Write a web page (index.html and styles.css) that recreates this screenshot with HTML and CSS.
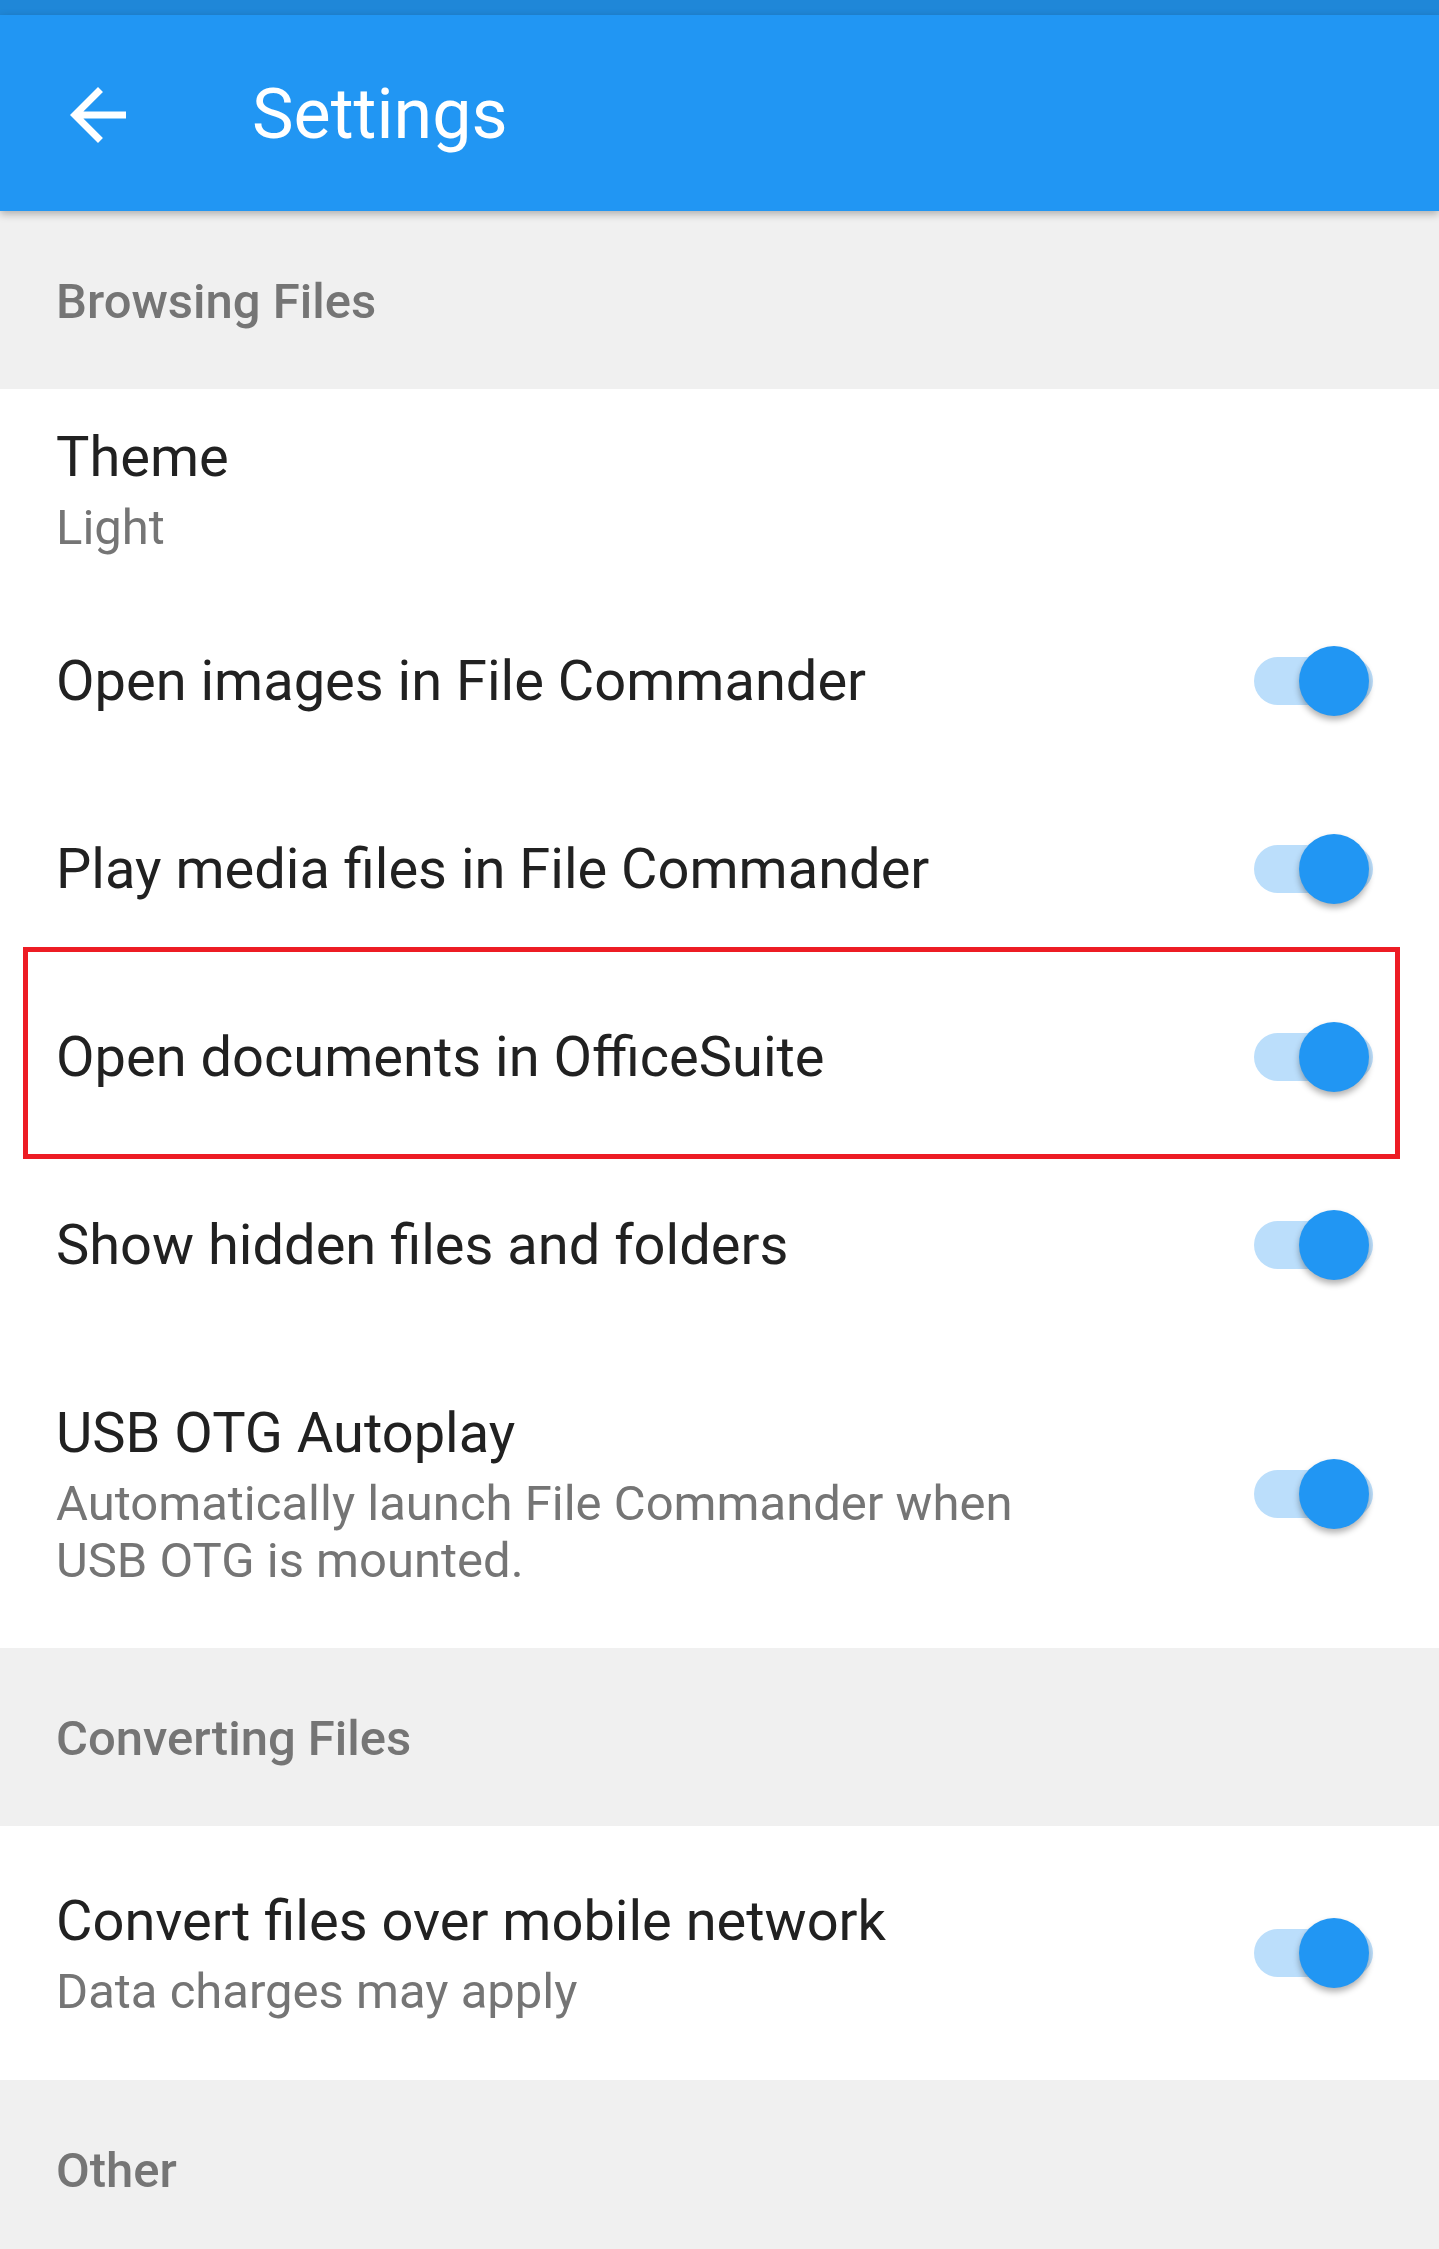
FILE: index.html
```html
<!DOCTYPE html>
<html lang="en">
<head>
  <meta charset="UTF-8">
  <title>Settings</title>
  <link rel="stylesheet" href="styles.css">
</head>
<body>
  <div class="status-bar"></div>

  <div class="app-bar">
    <svg class="back-icon" viewBox="0 0 24 24" width="84" height="84">
      <path d="M20 11H7.83l5.59-5.59L12 4l-8 8 8 8 1.41-1.41L7.83 13H20v-2z" fill="#fff"/>
    </svg>
    <div class="app-title">Settings</div>
  </div>

  <div class="section-header">Browsing Files</div>

  <div class="pref pref-theme">
    <div class="pref-text">
      <div class="pref-title">Theme</div>
      <div class="pref-summary">Light</div>
    </div>
  </div>

  <div class="pref pref-single">
    <div class="pref-text">
      <div class="pref-title">Open images in File Commander</div>
    </div>
    <div class="switch"><span class="track"></span><span class="thumb"></span></div>
  </div>

  <div class="pref pref-single">
    <div class="pref-text">
      <div class="pref-title">Play media files in File Commander</div>
    </div>
    <div class="switch"><span class="track"></span><span class="thumb"></span></div>
  </div>

  <div class="pref pref-single highlighted">
    <div class="pref-text">
      <div class="pref-title">Open documents in OfficeSuite</div>
    </div>
    <div class="switch"><span class="track"></span><span class="thumb"></span></div>
    <div class="red-box"></div>
  </div>

  <div class="pref pref-single">
    <div class="pref-text">
      <div class="pref-title">Show hidden files and folders</div>
    </div>
    <div class="switch"><span class="track"></span><span class="thumb"></span></div>
  </div>

  <div class="pref pref-usb">
    <div class="pref-text">
      <div class="pref-title">USB OTG Autoplay</div>
      <div class="pref-summary">Automatically launch File Commander when USB OTG is mounted.</div>
    </div>
    <div class="switch"><span class="track"></span><span class="thumb"></span></div>
  </div>

  <div class="section-header">Converting Files</div>

  <div class="pref pref-convert">
    <div class="pref-text">
      <div class="pref-title">Convert files over mobile network</div>
      <div class="pref-summary">Data charges may apply</div>
    </div>
    <div class="switch"><span class="track"></span><span class="thumb"></span></div>
  </div>

  <div class="section-header">Other</div>
</body>
</html>
```

FILE: styles.css
```css
body {
  margin: 0;
  font-family: Roboto, "Noto Sans", sans-serif;
  background-color: #f0f0f0;
}

.status-bar {
  height: 15px;
  background-color: #1f87d8;
}

/* top app bar */
.app-bar {
  position: relative;
  z-index: 1;
  height: 196px;
  display: flex;
  align-items: center;
  background-color: #2196f3;
  box-shadow: 0 3px 8px rgba(0, 0, 0, 0.28);
}

.back-icon {
  margin-left: 56px;
  margin-top: 4px;
}

.app-title {
  margin-left: 112px;
  font-size: 70px;
  color: #fff;
  margin-top: 2px;
}

/* group headers */
.section-header {
  box-sizing: border-box;
  height: 178px;
  padding: 61px 0 0 56px;
  font-size: 49px;
  line-height: 60px;
  font-weight: 500;
  color: #757575;
  background-color: #f0f0f0;
}

/* preference rows */
.pref {
  position: relative;
  display: flex;
  align-items: center;
  padding: 0 66px 0 56px;
  background-color: #fff;
}

.pref-single { height: 188px; }
.pref-theme { height: 198px; padding-top: 3px; box-sizing: border-box; }
.pref-usb { height: 309px; }
.pref-convert { height: 254px; }

.pref-text {
  flex: 1;
  max-width: 1040px;
}

.pref-title {
  font-size: 56px;
  line-height: 68px;
  color: #212121;
}

.pref-summary {
  margin-top: 8px;
  font-size: 49px;
  line-height: 57px;
  color: #757575;
}

/* switch */
.switch {
  position: relative;
  width: 119px;
  height: 70px;
  margin-left: auto;
}

.track {
  position: absolute;
  left: 0;
  top: 11px;
  width: 119px;
  height: 48px;
  border-radius: 24px;
  background-color: #bbdefb;
}

.thumb {
  position: absolute;
  left: 45px;
  top: 0;
  width: 70px;
  height: 70px;
  border-radius: 50%;
  background-color: #2196f3;
  box-shadow: 0 4px 6px rgba(0, 0, 0, 0.3);
}

/* annotation */
.highlighted {
  z-index: 2;
}

.red-box {
  position: absolute;
  left: 23px;
  width: 1377px;
  top: -16px;
  bottom: -8px;
  box-sizing: border-box;
  border: 5px solid #ed1c24;
  pointer-events: none;
}
```
